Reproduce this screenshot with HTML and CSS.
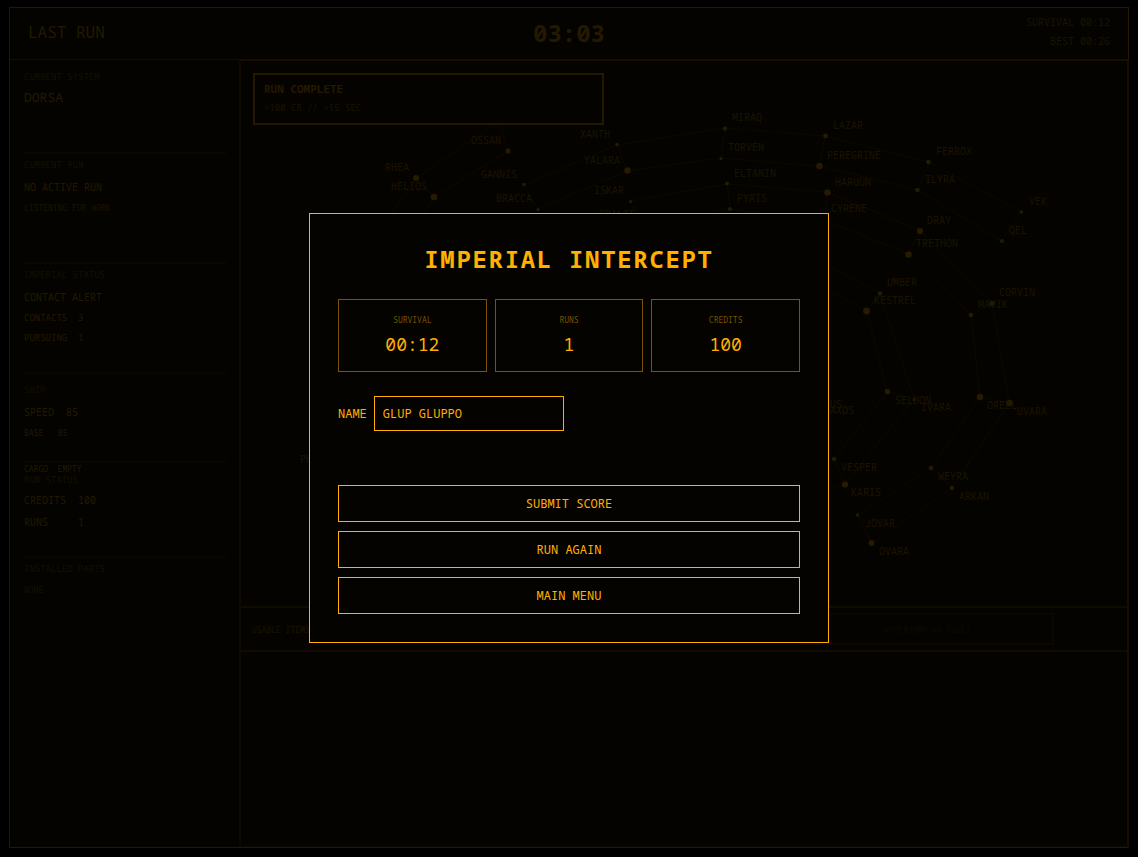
FILE: index.html
```html
<!DOCTYPE html>
<html lang="en">
<head>
    <meta charset="UTF-8">
    <meta name="viewport" content="width=device-width, initial-scale=1.0">
    <title>Last Run</title>
    <link rel="stylesheet" href="styles.css">
</head>
<body>
    <div class="shell">
        <header class="topbar">
            <div class="brand">LAST RUN</div>
            <div class="timer">03:03</div>
            <div class="records">
                <div>SURVIVAL 00:12</div>
                <div>BEST 00:26</div>
            </div>
        </header>
        <div class="game">
            <aside class="sidebar">
                <section class="panel panel-system">
                    <h2>CURRENT SYSTEM</h2>
                    <p class="system">DORSA</p>
                </section>
                <section class="panel panel-run">
                    <h2>CURRENT RUN</h2>
                    <p>NO ACTIVE RUN</p>
                    <p class="small">LISTENING FOR WORK</p>
                </section>
                <section class="panel panel-run">
                    <h2>IMPERIAL STATUS</h2>
                    <p>CONTACT ALERT</p>
                    <p class="count">CONTACTS  3</p>
                    <p class="count">PURSUING  1</p>
                </section>
                <section class="panel panel-ship">
                    <h2>SHIP</h2>
                    <p>SPEED  85</p>
                    <p class="small bright">BASE   85</p>
                </section>
                <section class="panel panel-credits">
                    <p class="small bright">CARGO  EMPTY</p>
                    <h2>RUN STATUS</h2>
                    <p>CREDITS  100</p>
                    <p>RUNS     1</p>
                </section>
                <section class="panel">
                    <h2>INSTALLED PARTS</h2>
                    <p class="small faint">NONE</p>
                </section>
            </aside>
            <main class="main">
                <div class="map">
                    <svg viewBox="241 61 886 545">
                        <g class="routes">
                            <path d="M392 213L416 178L495 125M416 178L434 197L508 151L500 125M434 197L424 213"/>
                            <path d="M501 213L524 185L617 145L725 128L825 136L929 162L1021 212L1002 241L918 190L819 166L721 158L627 171L538 209"/>
                            <path d="M524 185L538 209M617 145L627 171M725 128L721 158M825 136L819 166M929 162L918 190"/>
                            <path d="M617 213L630 201L727 184L827 192L920 231L992 303L1009 403L952 488L872 543L858 515L931 468L980 397L971 315L908 254L823 220"/>
                            <path d="M630 201L636 213M727 184L730 209M714 211L730 209L760 213M827 192L825 213M920 231L908 254M992 303L971 315M980 397L1009 403M931 468L952 488"/>
                            <path d="M829 267L880 293L914 399L845 484L829 490M829 291L867 311L887 392L834 459L845 484M880 293L867 311M887 392L914 399"/>
                        </g>
                        <g class="stars">
                            <circle cx="508" cy="151" r="2.5"/>
                            <circle cx="416" cy="178" r="3"/>
                            <circle cx="434" cy="197" r="3.3"/>
                            <circle cx="524" cy="184.500" r="1.8"/>
                            <circle cx="538" cy="209.500" r="1.6"/>
                            <circle cx="617" cy="144.500" r="1.8"/>
                            <circle cx="627.500" cy="170.500" r="3.2"/>
                            <circle cx="630.500" cy="201.500" r="1.6"/>
                            <circle cx="725" cy="128.500" r="2.2"/>
                            <circle cx="825.500" cy="136" r="2.4"/>
                            <circle cx="721" cy="158.500" r="1.6"/>
                            <circle cx="819.500" cy="166" r="3.3"/>
                            <circle cx="727" cy="183.500" r="2.1"/>
                            <circle cx="827.500" cy="192.500" r="3.3"/>
                            <circle cx="730" cy="209" r="2"/>
                            <circle cx="928.500" cy="162" r="2.3"/>
                            <circle cx="917.500" cy="190" r="2.3"/>
                            <circle cx="1021.500" cy="212" r="1.7"/>
                            <circle cx="1002" cy="241" r="2"/>
                            <circle cx="920" cy="231" r="3.1"/>
                            <circle cx="908.500" cy="254.500" r="3.3"/>
                            <circle cx="880" cy="293.500" r="2.2"/>
                            <circle cx="866.500" cy="311" r="3.4"/>
                            <circle cx="992" cy="303.500" r="2.8"/>
                            <circle cx="971" cy="315" r="2.3"/>
                            <circle cx="887.500" cy="391.500" r="2.7"/>
                            <circle cx="914.500" cy="399.500" r="1.8"/>
                            <circle cx="980" cy="397" r="3.3"/>
                            <circle cx="1009.500" cy="403" r="3.3"/>
                            <circle cx="834" cy="459" r="2.2"/>
                            <circle cx="845" cy="484.500" r="3.1"/>
                            <circle cx="931" cy="468" r="2.3"/>
                            <circle cx="952" cy="488" r="2.2"/>
                            <circle cx="857.500" cy="515" r="1.7"/>
                            <circle cx="871.500" cy="543" r="2.9"/>
                        </g>
                        <g class="names">
                            <text x="471" y="144">OSSAN</text>
                            <text x="385" y="171">RHEA</text>
                            <text x="391" y="190">HELIOS</text>
                            <text x="481" y="178">GANNIS</text>
                            <text x="496" y="202">BRACCA</text>
                            <text x="580" y="138">XANTH</text>
                            <text x="584" y="164">YALARA</text>
                            <text x="594" y="194">ISKAR</text>
                            <text x="599" y="218">PRALIS</text>
                            <text x="732" y="121">MIRAQ</text>
                            <text x="833" y="129">LAZAR</text>
                            <text x="728" y="151">TORVEN</text>
                            <text x="827" y="159">PEREGRINE</text>
                            <text x="734" y="177">ELTANIN</text>
                            <text x="835" y="186">HARUUN</text>
                            <text x="737" y="202">PYRIS</text>
                            <text x="831" y="212">CYRENE</text>
                            <text x="936" y="155">FERROX</text>
                            <text x="925" y="183">ILYRA</text>
                            <text x="1029" y="205">VEK</text>
                            <text x="1009" y="234">QEL</text>
                            <text x="927" y="224">DRAY</text>
                            <text x="916" y="247">TRETHON</text>
                            <text x="887" y="286">UMBER</text>
                            <text x="874" y="304">KESTREL</text>
                            <text x="999" y="296">CORVIN</text>
                            <text x="978" y="308">MAVIK</text>
                            <text x="895" y="404">SELDON</text>
                            <text x="921" y="411">IVARA</text>
                            <text x="987" y="409">OREEL</text>
                            <text x="1017" y="415">UVARA</text>
                            <text x="830" y="408">US</text>
                            <text x="830" y="414">AXOS</text>
                            <text x="841" y="471">VESPER</text>
                            <text x="851" y="496">KARIS</text>
                            <text x="938" y="480">WEYRA</text>
                            <text x="959" y="500">ARKAN</text>
                            <text x="865" y="527">JOVAR</text>
                            <text x="879" y="555">OVARA</text>
                            <text x="300" y="463">PH</text>
                        </g>
                    </svg>
                    <div class="notice">
                        <strong>RUN COMPLETE</strong>
                        <span>+100 CR // +15 SEC</span>
                    </div>
                </div>
                <div class="items">
                    <span>USABLE ITEMS</span>
                    <button class="item" type="button" disabled>HYPERJUMP x0 [USE]</button>
                </div>
            </main>
        </div>
    </div>

    <div class="overlay">
        <form class="dialog">
            <h1>IMPERIAL INTERCEPT</h1>
            <div class="stats">
                <div class="stat">
                    <span>SURVIVAL</span>
                    <strong>00:12</strong>
                </div>
                <div class="stat">
                    <span>RUNS</span>
                    <strong>1</strong>
                </div>
                <div class="stat">
                    <span>CREDITS</span>
                    <strong>100</strong>
                </div>
            </div>
            <div class="name-row">
                <label for="name">NAME</label>
                <input type="text" id="name" value="GLUP GLUPPO" maxlength="16">
            </div>
            <div class="actions">
                <button type="button">SUBMIT SCORE</button>
                <button type="button">RUN AGAIN</button>
                <button type="button">MAIN MENU</button>
            </div>
        </form>
    </div>
</body>
</html>
```
FILE: styles.css
```css
:root {
    --amber: #ffb000;
    --amber-dim: #7a5400;
    --screen: #050300;
    --line: #241800;
    --line-soft: #160e00;
    --line-faint: #090700;
    --text: #241900;
    --text-soft: #1b1300;
    --text-faint: #141000;
}
* {
    box-sizing: border-box;
}
body {
    margin: 0;
    background: #000;
    color: var(--text);
    font-family: "Noto Sans Mono", "DejaVu Sans Mono", monospace;
    font-size: 10px;
}
h1, h2, p {
    margin: 0;
}
button, input {
    font-family: inherit;
}
.shell {
    display: flex;
    flex-direction: column;
    min-height: calc(100vh - 16px);
    margin: 7px 9px 9px;
    border: 1px solid var(--line);
    background: var(--screen);
}
.topbar {
    display: grid;
    grid-template-columns: 1fr auto 1fr;
    align-items: center;
    height: 52px;
    padding: 0 18px 3px;
    border-bottom: 1px solid var(--line-soft);
}
.brand {
    font-size: 16px;
}
.timer {
    font-size: 24px;
    font-weight: bold;
}
.records {
    color: var(--text-soft);
    line-height: 19px;
    text-align: right;
}
.game {
    display: flex;
    flex: 1;
}
.sidebar {
    flex: none;
    width: 229px;
    padding: 1px 13px 0 14px;
}
.panel {
    line-height: 22px;
    border-bottom: 2px solid var(--line-faint);
}
.panel:last-child {
    border-bottom: none;
}
.panel h2 {
    color: var(--text-faint);
    font-size: 9px;
    font-weight: normal;
}
.panel p {
    white-space: pre;
}
.panel .system {
    font-size: 13px;
    line-height: 19px;
}
.panel .small {
    color: var(--text-soft);
    font-size: 8px;
    line-height: 20px;
}
.panel .count {
    font-size: 9px;
    line-height: 20px;
}
.panel .bright {
    color: var(--text);
}
.panel .faint {
    color: var(--text-faint);
}
.panel-system {
    height: 93px;
    padding-top: 5px;
}
.panel-run {
    height: 110px;
}
.panel-ship {
    height: 89px;
    padding-top: 5px;
}
.panel-credits {
    height: 95px;
}
.panel-credits .small,
.panel-credits h2 {
    line-height: 11px;
}
.panel-credits h2 {
    margin-bottom: 4px;
}
.main {
    flex: 1;
    min-width: 0;
    margin: -1px -1px 0 0;
    border: 2px solid var(--line-faint);
    border-top-color: var(--line-soft);
    border-right-color: #160f00;
    border-left-color: #0e0900;
}
.map {
    position: relative;
}
.map svg {
    display: block;
    width: 100%;
}
.routes path {
    fill: none;
    stroke: #0c0900;
}
.stars circle {
    fill: #261a00;
}
.names text {
    fill: var(--text-soft);
    font-size: 10px;
}
.notice {
    position: absolute;
    top: 12px;
    left: 12px;
    display: flex;
    flex-direction: column;
    width: 351px;
    padding: 5px 9px;
    border: 2px solid var(--line);
    background: var(--screen);
    font-size: 11px;
    line-height: 18px;
}
.notice span {
    color: var(--text-soft);
    font-size: 9px;
    line-height: 20px;
}
.items {
    display: flex;
    align-items: center;
    justify-content: space-between;
    height: 46px;
    padding: 0 73px 0 11px;
    border-top: 2px solid #120b00;
    border-bottom: 2px solid #120b00;
    color: var(--text-soft);
    font-size: 8px;
}
.item {
    width: 254px;
    height: 32px;
    border: 2px solid var(--line-faint);
    background: none;
    color: #0e0a00;
    font-size: 8px;
}
.overlay {
    position: fixed;
    inset: 0;
    display: flex;
    align-items: center;
    justify-content: center;
    padding-bottom: 2px;
}
.dialog {
    width: 520px;
    padding: 28px;
    border: 1px solid var(--amber);
    background: var(--screen);
    color: var(--amber);
    font-size: 12px;
}
.dialog h1 {
    margin-bottom: 23px;
    font-size: 24px;
    line-height: 34px;
    letter-spacing: 0.07em;
    text-align: center;
}
.stats {
    display: grid;
    grid-template-columns: repeat(3, 1fr);
    gap: 8px;
}
.stat {
    display: flex;
    flex-direction: column;
    gap: 6px;
    padding: 14px 14px 15px;
    border: 1px solid var(--amber-dim);
    text-align: center;
}
.stat span {
    color: var(--amber-dim);
    font-size: 8px;
    line-height: 12px;
}
.stat strong {
    font-size: 18px;
    font-weight: normal;
    line-height: 24px;
}
.name-row {
    display: flex;
    align-items: center;
    gap: 7px;
    margin: 24px 0 54px;
}
.name-row input {
    width: 190px;
    height: 35px;
    padding: 8px;
    border: 1px solid var(--amber);
    background: var(--screen);
    color: var(--amber);
    font-size: 12px;
}
.actions {
    display: grid;
    gap: 9px;
}
.actions button {
    height: 37px;
    border: 1px solid var(--amber);
    background: var(--screen);
    color: var(--amber);
    font-size: 12px;
    cursor: pointer;
}
.actions button:hover {
    background: var(--amber);
    color: var(--screen);
}
```
